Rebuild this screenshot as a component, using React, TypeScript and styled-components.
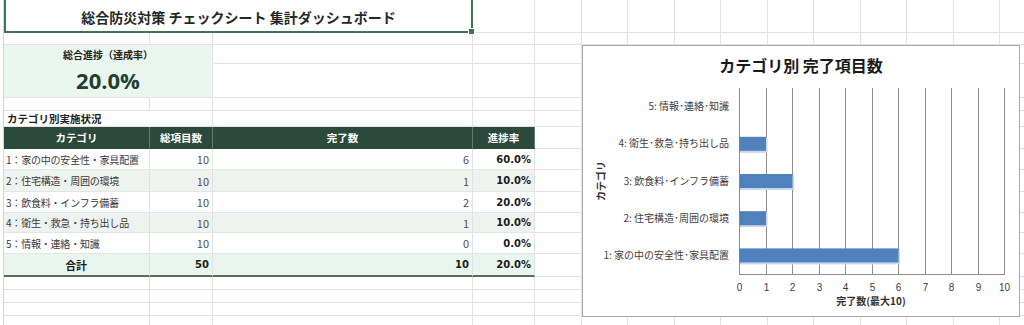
import React from 'react';
import styled, { createGlobalStyle, css } from 'styled-components';

const GlobalStyle = createGlobalStyle`
  body {
    margin: 0;
    background: #fff;
    font-family: "Noto Sans CJK JP", "Noto Sans", sans-serif;
    color: #333;
    overflow: hidden;
  }
`;

const COLS = [146, 63, 260, 62, 47, 46, 47, 46, 47, 46, 47, 46, 47, 46, 47];
const ROWS = [33, 12, 19, 34, 13, 16, 22, 21, 22, 21, 20, 21, 23, 13, 13, 13, 13];
const GRID = '#e2e2e2';
const MINT = '#eaf6ee';

const Sheet = styled.div`
  position: relative;
  display: grid;
  grid-template-columns: ${COLS.map((c) => c + 'px').join(' ')};
  grid-template-rows: ${ROWS.map((r) => r + 'px').join(' ')};
  margin-left: 3px;
  border-left: 1px solid #d4d4d4;
  width: max-content;
`;

const Cell = styled.div<{ $span?: number }>`
  box-sizing: border-box;
  min-width: 0;
  display: flex;
  align-items: center;
  border-right: 1px solid ${GRID};
  border-bottom: 1px solid ${GRID};
  grid-column: span ${(p) => p.$span || 1};
`;

const TitleCell = styled(Cell)`
  position: relative;
  justify-content: center;
  border: 2px solid #3d7555;
  border-top: none;
  font-size: 14px;
  font-weight: 700;
  color: #1f2a24;
  padding-top: 2px;
`;

const Handle = styled.span`
  position: absolute;
  right: -4px;
  bottom: -4px;
  width: 5px;
  height: 5px;
  background: #3d7555;
  border: 1px solid #fff;
`;

const ProgressCell = styled(Cell)<{ $big?: boolean }>`
  justify-content: center;
  background: ${MINT};
  border-bottom-color: ${(p) => (p.$big ? GRID : MINT)};
  color: #222;
  font-weight: 700;
  font-size: 10px;
  ${(p) =>
    p.$big &&
    css`
      font-family: "Open Sans", sans-serif;
      font-size: 22px;
      color: #243f31;
      padding-bottom: 2px;
    `}
`;

const SectionLabel = styled(Cell)`
  white-space: nowrap;
  overflow: visible;
  font-size: 10.5px;
  font-weight: 700;
  color: #222;
  padding-left: 3px;
  border-right-color: transparent;
`;

const HeadCell = styled(Cell)`
  justify-content: center;
  background: #2c4a3c;
  color: #fff;
  font-size: 10.5px;
  font-weight: 700;
  border-right-color: #607c6d;
  border-bottom-color: #2c4a3c;
`;

const DataCell = styled(Cell)<{ $alt?: boolean; $align?: 'left' | 'right' | 'center'; $strong?: boolean; $total?: boolean }>`
  white-space: nowrap;
  background: ${(p) => (p.$total ? '#e8f6ed' : p.$alt ? '#eff3f0' : '#fff')};
  justify-content: ${(p) => (p.$align === 'left' ? 'flex-start' : p.$align === 'center' ? 'center' : 'flex-end')};
  padding: 0 3px 0 2px;
  font-size: 10px;
  letter-spacing: -0.2px;
  color: #3a3a3a;
  border-bottom-color: #e4e6e4;
  ${(p) =>
    p.$strong &&
    css`
      font-family: "DejaVu Sans", sans-serif;
      font-weight: 700;
      letter-spacing: 0;
      color: #1c1c1c;
    `}
  ${(p) =>
    p.$total &&
    css`
      font-weight: 700;
      font-size: 11px;
      color: #1c1c1c;
      border-bottom: 2px solid #5c6a63;
    `}
`;

const Num = styled.span<{ $bold?: boolean }>`
  font-family: ${(p) => (p.$bold ? '"DejaVu Sans"' : '"Noto Sans CJK JP"')}, sans-serif;
  font-size: ${(p) => (p.$bold ? '10px' : '11px')};
  letter-spacing: 0;
  color: ${(p) => (p.$bold ? '#1c1c1c' : '#505050')};
`;

const ChartFrame = styled.div`
  position: absolute;
  left: 578px;
  top: 45px;
  width: 438px;
  height: 272px;
  box-sizing: border-box;
  border: 1px solid #a9a9a9;
  background: #fff;
  display: flex;
  flex-direction: column;
`;

const ChartTitle = styled.div`
  height: 34px;
  padding-top: 2px;
  line-height: 34px;
  text-align: center;
  font-size: 16px;
  font-weight: 700;
  color: #1a1a1a;
`;

const blanks = (n: number, key: string) =>
  Array.from({ length: n }, (_, i) => <Cell key={key + i} />);

const categories = [
  { table: '1：家の中の安全性・家具配置', chart: '1: 家の中の安全性･家具配置', total: 10, done: 6 },
  { table: '2：住宅構造・周囲の環境', chart: '2: 住宅構造･周囲の環境', total: 10, done: 1 },
  { table: '3：飲食料・インフラ備蓄', chart: '3: 飲食料･インフラ備蓄', total: 10, done: 2 },
  { table: '4：衛生・救急・持ち出し品', chart: '4: 衛生･救急･持ち出し品', total: 10, done: 1 },
  { table: '5：情報・連絡・知識', chart: '5: 情報･連絡･知識', total: 10, done: 0 },
];

const pct = (a: number, b: number) => ((a / b) * 100).toFixed(1) + '%';

const Chart = () => {
  const x0 = 156;
  const step = 26.5;
  const top = 6;
  const bottom = 192;
  const slot = (bottom - top) / categories.length;
  const ordered = [...categories].reverse();
  return (
    <ChartFrame>
      <ChartTitle>カテゴリ別 完了項目数</ChartTitle>
      <svg width={436} height={234} style={{ display: 'block' }}>
        {Array.from({ length: 11 }, (_, i) => {
          const x = Math.round(x0 + i * step) + 0.5;
          return (
            <g key={i}>
              <line x1={x} x2={x} y1={top} y2={bottom} stroke="#8e8e8e" strokeWidth={1} />
              <text x={x} y={209} fontSize={10} fill="#404040" textAnchor="middle" fontFamily="Liberation Sans, sans-serif">
                {i}
              </text>
            </g>
          );
        })}
        <line x1={x0} x2={x0 + 10 * step + 1} y1={bottom + 0.5} y2={bottom + 0.5} stroke="#8e8e8e" />
        {ordered.map((c, i) => {
          const cy = top + slot * i + slot / 2;
          const w = c.done * step;
          return (
            <g key={c.chart}>
              <text x={146} y={cy + 3.5} fontSize={10} fill="#404040" textAnchor="end" fontFamily="Noto Sans CJK JP, sans-serif">
                {c.chart}
              </text>
              {w > 0 && (
                <>
                  <rect x={x0 + 1} y={cy - 6} width={w + 1} height={15} fill="#c9d6e8" />
                  <rect x={x0 + 0.5} y={cy - 7} width={w} height={14} fill="#4f81bd" />
                </>
              )}
            </g>
          );
        })}
        <text x={288} y={223} fontSize={10} fontWeight={700} fill="#333" textAnchor="middle" fontFamily="Noto Sans CJK JP, sans-serif">
          完了数(最大10)
        </text>
        <text
          x={0}
          y={0}
          fontSize={10}
          fontWeight={700}
          fill="#333"
          textAnchor="middle"
          fontFamily="Noto Sans CJK JP, sans-serif"
          transform="translate(22 99) rotate(-90)"
        >
          カテゴリ
        </text>
      </svg>
    </ChartFrame>
  );
};

export default function App() {
  const sumTotal = categories.reduce((s, c) => s + c.total, 0);
  const sumDone = categories.reduce((s, c) => s + c.done, 0);
  return (
    <>
      <GlobalStyle />
      <Sheet>
        <TitleCell $span={3}>
          総合防災対策 チェックシート 集計ダッシュボード
          <Handle />
        </TitleCell>
        {blanks(12, 'r1')}

        {blanks(15, 'r2')}

        <ProgressCell $span={2}>総合進捗（達成率）</ProgressCell>
        {blanks(13, 'r3')}

        <ProgressCell $span={2} $big>
          {pct(sumDone, sumTotal)}
        </ProgressCell>
        {blanks(13, 'r4')}

        {blanks(15, 'r5')}

        <SectionLabel>カテゴリ別実施状況</SectionLabel>
        {blanks(14, 'r6')}

        <HeadCell>カテゴリ</HeadCell>
        <HeadCell>総項目数</HeadCell>
        <HeadCell>完了数</HeadCell>
        <HeadCell>進捗率</HeadCell>
        {blanks(11, 'h')}

        {categories.map((c, i) => (
          <React.Fragment key={c.table}>
            <DataCell $alt={i % 2 === 1} $align="left">{c.table}</DataCell>
            <DataCell $alt={i % 2 === 1}><Num>{c.total}</Num></DataCell>
            <DataCell $alt={i % 2 === 1}><Num>{c.done}</Num></DataCell>
            <DataCell $alt={i % 2 === 1} $strong>{pct(c.done, c.total)}</DataCell>
            {blanks(11, 'd' + i)}
          </React.Fragment>
        ))}

        <DataCell $total $align="center">合計</DataCell>
        <DataCell $total><Num $bold>{sumTotal}</Num></DataCell>
        <DataCell $total><Num $bold>{sumDone}</Num></DataCell>
        <DataCell $total><Num $bold>{pct(sumDone, sumTotal)}</Num></DataCell>
        {blanks(11, 't')}

        {blanks(60, 'e')}

        <Chart />
      </Sheet>
    </>
  );
}
